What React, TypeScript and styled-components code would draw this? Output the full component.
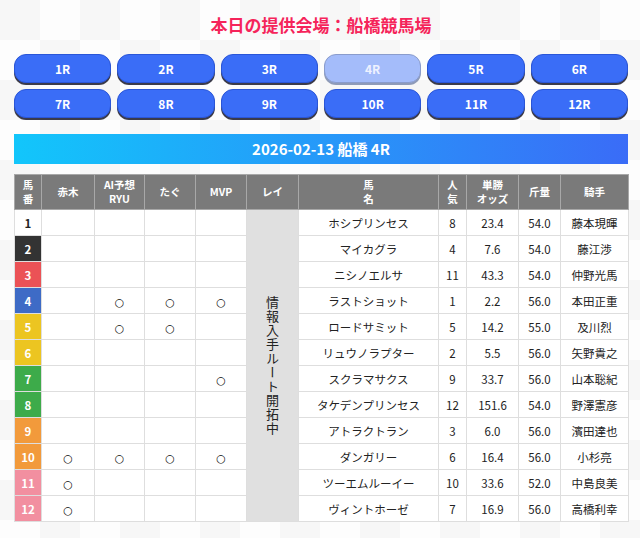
import React from 'react'
import styled, { createGlobalStyle } from 'styled-components'

const GlobalStyle = createGlobalStyle`
  body {
    margin: 0;
    font-family: "Noto Sans CJK JP", "Noto Sans", sans-serif;
    background-color: #f7f7f7;
    background-image:
      linear-gradient(45deg, #fdfdfd 25%, transparent 25%, transparent 75%, #fdfdfd 75%),
      linear-gradient(45deg, #fdfdfd 25%, transparent 25%, transparent 75%, #fdfdfd 75%);
    background-size: 80px 80px;
    background-position: 0 0, 40px 40px;
  }
`

const Page = styled.div`
  width: 614px;
  padding: 12px 12px 14px 14px;
`

const Title = styled.h1`
  margin: 0;
  height: 26px;
  line-height: 26px;
  text-align: center;
  font-size: 17px;
  font-weight: 700;
  color: #f5245a;
`

const RaceGrid = styled.div`
  display: grid;
  grid-template-columns: repeat(6, 1fr);
  gap: 6px 6px;
  margin-top: 16px;
`

const RaceButton = styled.button<{ $active?: boolean }>`
  height: 29px;
  border: 1px solid ${p => (p.$active ? '#8a9ccc' : '#2a56d8')};
  border-radius: 12px;
  background: ${p => (p.$active ? '#a4bcfa' : '#3a6df7')};
  color: ${p => (p.$active ? '#eef2ff' : '#fff')};
  box-shadow: 0 2px 0 ${p => (p.$active ? '#8f9bb8' : '#3b3b4a')};
  font-family: inherit;
  font-size: 12px;
  font-weight: 700;
  padding: 0;
`

const RaceBar = styled.div`
  margin-top: 16px;
  height: 30px;
  line-height: 30px;
  text-align: center;
  color: #fff;
  font-size: 15px;
  font-weight: 700;
  background: linear-gradient(90deg, #12c6fb 0%, #3a6cf7 100%);
`

const Table = styled.table`
  margin-top: 10px;
  width: 614px;
  border-collapse: collapse;
  table-layout: fixed;
  background: #fff;
  font-size: 11.5px;
  color: #222;
`

const Th = styled.th`
  height: 34px;
  padding: 0;
  background: #7a7a7a;
  color: #fff;
  font-size: 10.5px;
  font-weight: 700;
  line-height: 14px;
  border: 1px solid #a8a8a8;
`

const Td = styled.td`
  height: 25px;
  padding: 0;
  text-align: center;
  border: 1px solid #dedede;
`

const NumCell = styled(Td)<{ $bg: string; $fg: string }>`
  background: ${p => p.$bg};
  color: ${p => p.$fg};
  font-weight: 700;
  font-size: 11.5px;
`

const Mark = styled.span`
  font-family: "DejaVu Sans", sans-serif;
  font-size: 11px;
  font-weight: 700;
  color: #111;
`

const ReiCell = styled(Td)`
  background: #e0e0e0;
  vertical-align: middle;
`

const VerticalText = styled.div`
  writing-mode: vertical-rl;
  margin: 0 auto;
  font-size: 13px;
  letter-spacing: 1px;
  color: #222;
`

const waku: [string, string][] = [
  ['#ffffff', '#222'],
  ['#333333', '#fff'],
  ['#eb5256', '#fff'],
  ['#3e6bc6', '#fff'],
  ['#ecc521', '#fff'],
  ['#ecc521', '#fff'],
  ['#3dab4a', '#fff'],
  ['#3dab4a', '#fff'],
  ['#f29a3b', '#fff'],
  ['#f29a3b', '#fff'],
  ['#f28fa0', '#fff'],
  ['#f28fa0', '#fff'],
]

const horses = [
  { name: 'ホシプリンセス', pop: 8, odds: '23.4', w: '54.0', jockey: '藤本現暉', marks: [0, 0, 0, 0] },
  { name: 'マイカグラ', pop: 4, odds: '7.6', w: '54.0', jockey: '藤江渉', marks: [0, 0, 0, 0] },
  { name: 'ニシノエルサ', pop: 11, odds: '43.3', w: '54.0', jockey: '仲野光馬', marks: [0, 0, 0, 0] },
  { name: 'ラストショット', pop: 1, odds: '2.2', w: '56.0', jockey: '本田正重', marks: [0, 1, 1, 1] },
  { name: 'ロードサミット', pop: 5, odds: '14.2', w: '55.0', jockey: '及川烈', marks: [0, 1, 1, 0] },
  { name: 'リュウノラプター', pop: 2, odds: '5.5', w: '56.0', jockey: '矢野貴之', marks: [0, 0, 0, 0] },
  { name: 'スクラマサクス', pop: 9, odds: '33.7', w: '56.0', jockey: '山本聡紀', marks: [0, 0, 0, 1] },
  { name: 'タケデンプリンセス', pop: 12, odds: '151.6', w: '54.0', jockey: '野澤憲彦', marks: [0, 0, 0, 0] },
  { name: 'アトラクトラン', pop: 3, odds: '6.0', w: '56.0', jockey: '濱田達也', marks: [0, 0, 0, 0] },
  { name: 'ダンガリー', pop: 6, odds: '16.4', w: '56.0', jockey: '小杉亮', marks: [1, 1, 1, 1] },
  { name: 'ツーエムルーイー', pop: 10, odds: '33.6', w: '52.0', jockey: '中島良美', marks: [1, 0, 0, 0] },
  { name: 'ヴィントホーゼ', pop: 7, odds: '16.9', w: '56.0', jockey: '高橋利幸', marks: [1, 0, 0, 0] },
]

const colWidths = [27, 53, 50, 51, 51, 52, 140, 28, 52, 42, 68]

const App = () => {
  const races = Array.from({ length: 12 }, (_, i) => `${i + 1}R`)

  return (
    <Page>
      <GlobalStyle />
      <Title>本日の提供会場：船橋競馬場</Title>

      <RaceGrid>
        {races.map(r => (
          <RaceButton key={r} $active={r === '4R'}>{r}</RaceButton>
        ))}
      </RaceGrid>

      <RaceBar>2026-02-13 船橋 4R</RaceBar>

      <Table>
        <colgroup>
          {colWidths.map((w, i) => <col key={i} style={{ width: w }} />)}
        </colgroup>
        <thead>
          <tr>
            <Th>馬<br />番</Th>
            <Th>赤木</Th>
            <Th>AI予想<br />RYU</Th>
            <Th>たぐ</Th>
            <Th>MVP</Th>
            <Th>レイ</Th>
            <Th>馬<br />名</Th>
            <Th>人<br />気</Th>
            <Th>単勝<br />オッズ</Th>
            <Th>斤量</Th>
            <Th>騎手</Th>
          </tr>
        </thead>
        <tbody>
          {horses.map((h, i) => (
            <tr key={h.name}>
              <NumCell $bg={waku[i][0]} $fg={waku[i][1]}>{i + 1}</NumCell>
              {h.marks.map((m, j) => <Td key={j}>{m ? <Mark>○</Mark> : ''}</Td>)}
              {i === 0 && (
                <ReiCell rowSpan={12}>
                  <VerticalText>情報入手ルート開拓中</VerticalText>
                </ReiCell>
              )}
              <Td>{h.name}</Td>
              <Td>{h.pop}</Td>
              <Td>{h.odds}</Td>
              <Td>{h.w}</Td>
              <Td>{h.jockey}</Td>
            </tr>
          ))}
        </tbody>
      </Table>
    </Page>
  )
}

export default App
